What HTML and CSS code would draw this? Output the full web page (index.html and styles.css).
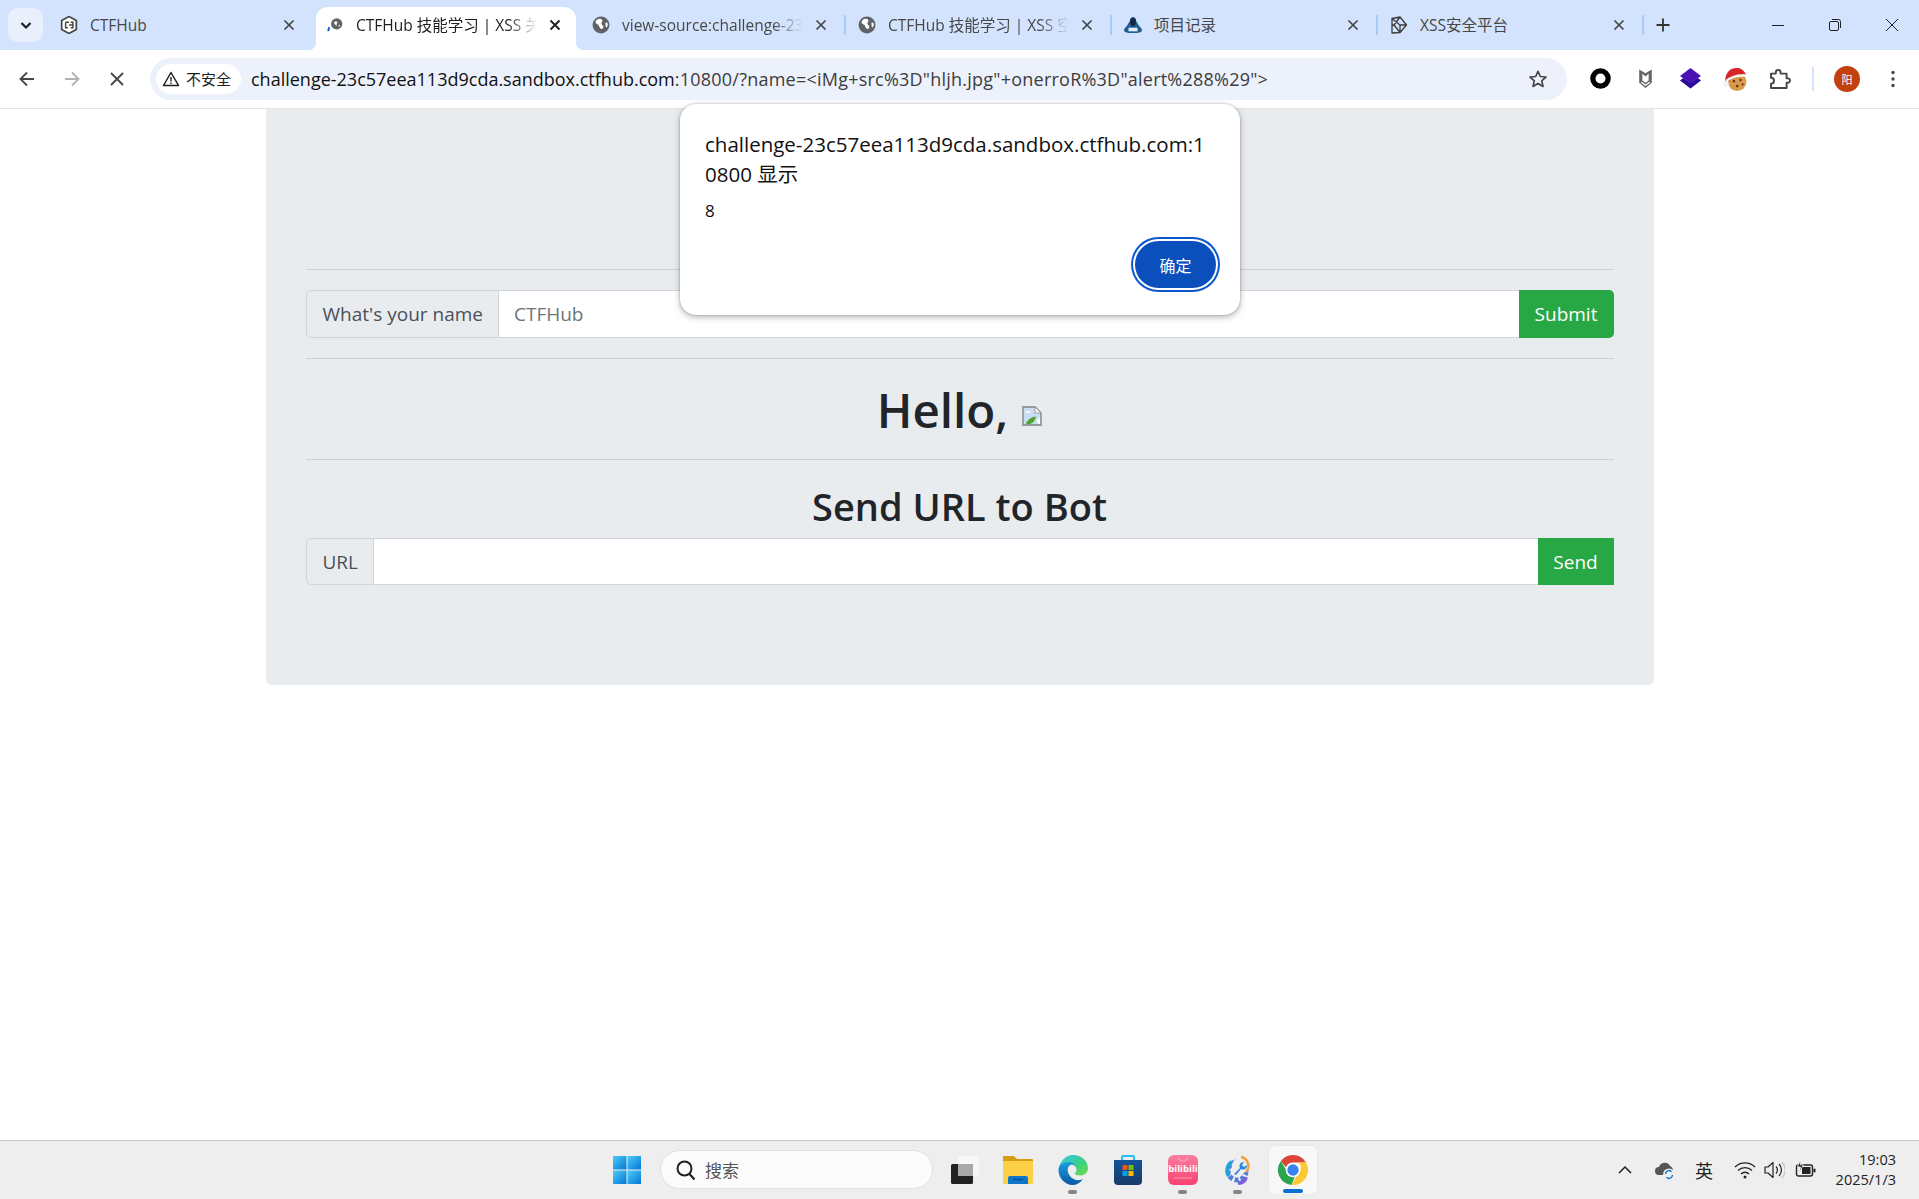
FILE: index.html
```html
<!DOCTYPE html>
<html lang="zh-CN">
<head>
<meta charset="utf-8">
<title>CTFHub 技能学习 | XSS</title>
<link rel="stylesheet" href="styles.css">
</head>
<body>
<header class="tabstrip">
  <button class="tab-search" aria-label="搜索标签页"><svg width="16" height="16" viewBox="0 0 16 16"><path d="M3.5 6 8 10.5 12.5 6" fill="none" stroke="#1f1f1f" stroke-width="2.2"/></svg></button>
  <div class="tab">
    <div class="tab-body">
      <svg class="fav" viewBox="0 0 16 16"><path d="M8 .5 14.500 4v8L8 15.500 1.500 12V4z" fill="#fff" stroke="#444" stroke-width="1.500"/><path d="M5 5.500h3M5 5.500v5h2M8 8h3M9.500 5.500h2v5h-2" fill="none" stroke="#444" stroke-width="1.300"/></svg>
      <span class="tab-title">CTFHub</span>
      <svg class="close" viewBox="0 0 20 20"><path d="M5.500 5.500l9 9M14.500 5.500l-9 9" stroke="#444746" stroke-width="1.700"/></svg>
    </div>
  </div>
  <div class="tab tab-active">
    <div class="tab-body">
      <svg class="fav" viewBox="0 0 16 16"><circle cx="9.500" cy="7" r="5" fill="#5f6368"/><path d="M7 5.500c1.500-1 2.500-1 3 0s-1 1-.5 2.500-1.500 0-2.500-2.500zM11.500 8c.7-.5 1-.3 1 .3s-1 1.700-1.500 1.200z" fill="#fff"/><path d="M2.200 13.500A5 5 0 0 1 3 10" fill="none" stroke="#0b57d0" stroke-width="1.800"/></svg>
      <span class="tab-title tab-fade title-strong">CTFHub 技能学习 | XSS 关</span>
      <svg class="close" viewBox="0 0 20 20"><path d="M5.500 5.500l9 9M14.500 5.500l-9 9" stroke="#1f1f1f" stroke-width="1.900"/></svg>
    </div>
  </div>
  <div class="tab tab-sep">
    <div class="tab-body">
      <svg class="fav" viewBox="0 0 16 16"><circle cx="8" cy="8" r="7.500" fill="#5f6368"/><path d="M4 3.500c2-1.500 4-1.500 5 0s-1 2-.5 3.500 2 1 1.500 3-2 2-3 .5-.5-2.500-2-3-2.500-1.500-1.500-3zM12 6c1-.5 2 0 2 1.500s-1 3-1.500 2.500-.5-2.500-.5-4z" fill="#fff"/></svg>
      <span class="tab-title tab-fade">view-source:challenge-23</span>
      <svg class="close" viewBox="0 0 20 20"><path d="M5.500 5.500l9 9M14.500 5.500l-9 9" stroke="#444746" stroke-width="1.700"/></svg>
    </div>
  </div>
  <div class="tab tab-sep">
    <div class="tab-body">
      <svg class="fav" viewBox="0 0 16 16"><circle cx="8" cy="8" r="7.500" fill="#5f6368"/><path d="M4 3.500c2-1.500 4-1.500 5 0s-1 2-.5 3.500 2 1 1.500 3-2 2-3 .5-.5-2.500-2-3-2.500-1.500-1.500-3zM12 6c1-.5 2 0 2 1.500s-1 3-1.500 2.500-.5-2.500-.5-4z" fill="#fff"/></svg>
      <span class="tab-title tab-fade">CTFHub 技能学习 | XSS 空</span>
      <svg class="close" viewBox="0 0 20 20"><path d="M5.500 5.500l9 9M14.500 5.500l-9 9" stroke="#444746" stroke-width="1.700"/></svg>
    </div>
  </div>
  <div class="tab tab-sep">
    <div class="tab-body">
      <svg class="fav" viewBox="0 0 20 20"><path d="M10 1c2 0 3.500 2 3.500 4.500l3 5c1.500 2 3.500 3 3.500 5.500-.5 2-4 3-10 3s-9.500-1-10-3c0-2.500 2-3.500 3.500-5.500l3-5C6.500 3 8 1 10 1z" fill="#1f5f91"/><path d="M7 4c1-2 5-2 6 0v5l-3 3-3-3z" fill="#12293f"/><rect x="5" y="13" width="10" height="4" fill="#e6eef5"/></svg>
      <span class="tab-title">项目记录</span>
      <svg class="close" viewBox="0 0 20 20"><path d="M5.500 5.500l9 9M14.500 5.500l-9 9" stroke="#444746" stroke-width="1.700"/></svg>
    </div>
  </div>
  <div class="tab tab-sep">
    <div class="tab-body">
      <svg class="fav" viewBox="0 0 18 18"><path d="M2 2.500 10 1l6.500 8L10 16.500 2 17zM2 2.500l8 6.500 6.500 0M10 1 4 9l6 7.500M2 9.500l2-.5M10 9v7.500" fill="none" stroke="#3c3c3c" stroke-width="1.300" stroke-linejoin="round"/></svg>
      <span class="tab-title">XSS安全平台</span>
      <svg class="close" viewBox="0 0 20 20"><path d="M5.500 5.500l9 9M14.500 5.500l-9 9" stroke="#444746" stroke-width="1.700"/></svg>
    </div>
  </div>
  <button class="new-tab" aria-label="新标签页"><svg width="16" height="16" viewBox="0 0 16 16"><path d="M8 1.500v13M1.500 8h13" stroke="#333" stroke-width="1.800"/></svg></button>
  <div class="win-controls">
    <svg viewBox="0 0 16 16"><path d="M2 8.500h12" stroke="#222" stroke-width="1"/></svg>
    <svg viewBox="0 0 16 16"><rect x="2.500" y="4.500" width="9" height="9" rx="1.500" fill="none" stroke="#222"/><path d="M5 2.500h6.500a2 2 0 0 1 2 2V11" fill="none" stroke="#222"/></svg>
    <svg viewBox="0 0 16 16"><path d="M2 2l12 12M14 2 2 14" stroke="#222" stroke-width="1"/></svg>
  </div>
</header>

<nav class="toolbar">
  <button class="tool-btn" aria-label="后退"><svg viewBox="0 0 20 20"><path d="M17 10H4M10 3.500 3.500 10l6.500 6.500" fill="none" stroke="#444746" stroke-width="1.800"/></svg></button>
  <button class="tool-btn" aria-label="前进"><svg viewBox="0 0 20 20"><path d="M3 10h13M10 3.500l6.500 6.500-6.500 6.500" fill="none" stroke="#b0b1b1" stroke-width="1.800"/></svg></button>
  <button class="tool-btn" aria-label="停止"><svg viewBox="0 0 20 20"><path d="M4 4l12 12M16 4 4 16" stroke="#444746" stroke-width="1.800"/></svg></button>
  <div class="omnibox">
    <span class="chip">
      <svg width="18" height="18" viewBox="0 0 18 18"><path d="M9 2.500 16.500 15.500h-15z" fill="none" stroke="#1f1f1f" stroke-width="1.500" stroke-linejoin="round"/><path d="M9 7v4.500M9 12.500v1.500" stroke="#1f1f1f" stroke-width="1.400"/></svg>
      <span>不安全</span>
    </span>
    <span class="url"><span class="host">challenge-23c57eea113d9cda.sandbox.ctfhub.com</span>:10800/?name=&lt;iMg+src%3D"hljh.jpg"+onerroR%3D"alert%288%29"&gt;</span>
    <svg class="star" viewBox="0 0 20 20"><path d="M10 2.300l2.300 5.200 5.700.5-4.300 3.800 1.300 5.600-5-3-5 3 1.300-5.600L2 8l5.700-.5z" fill="none" stroke="#444746" stroke-width="1.700" stroke-linejoin="round"/></svg>
  </div>
  <div class="ext-list">
    <span class="ext"><svg viewBox="0 0 20 20"><circle cx="10" cy="10" r="7.300" fill="none" stroke="#000" stroke-width="5"/></svg></span>
    <span class="ext"><svg viewBox="0 0 20 20"><path d="M4 1.500l6 3.500 6-3.500V14l-6 5-6-5z" fill="#666"/><path d="M7 5.500 10 8l3-2.500V12l-3 2-3-2z" fill="#fff"/><path d="M6 13.500l4 3 4-3" fill="none" stroke="#fff" stroke-width="1.200"/></svg></span>
    <span class="ext"><svg viewBox="0 0 20 20"><path d="M3 9.500 10 14l7-4.500 3 2.500-10 7.500L0 12z" fill="#2e0a99"/><path d="M10 0 20 7.500 10 14.500 0 7.500z" fill="#4a12b5"/></svg></span>
    <span class="ext"><svg class="ext-large" viewBox="0 0 22 22"><circle cx="13" cy="13.500" r="8.500" fill="#d99a4c"/><circle cx="10" cy="13" r="1.200" fill="#6b3c16"/><circle cx="16" cy="12" r="1.200" fill="#6b3c16"/><circle cx="13" cy="17.500" r="1.300" fill="#6b3c16"/><circle cx="18" cy="16" r="1" fill="#6b3c16"/><path d="M2 13C2 4 8 0 14 1c3 .5 6 3 7 6-5-1.500-12-1-15 6z" fill="#d6262b"/><path d="M3 13c3-3 9-5.500 18-5" fill="none" stroke="#f4f4f4" stroke-width="2.200"/><circle cx="2.800" cy="15.500" r="2.500" fill="#f4f4f4"/></svg></span>
    <span class="ext"><svg class="ext-large" viewBox="0 0 20 20"><path d="M2.500 5.500h4v-1a2 2 0 0 1 4 0v1h5v4h1a1.800 1.800 0 0 1 0 3.600h-1v4.400H2.500V14a2.500 2.500 0 0 0 0-5z" fill="none" stroke="#444746" stroke-width="1.600" stroke-linejoin="round"/></svg></span>
  </div>
  <span class="tool-sep"></span>
  <span class="avatar">阳</span>
  <button class="menu-btn" aria-label="菜单"><svg width="16" height="20" viewBox="0 0 16 20"><circle cx="8" cy="3.500" r="1.700" fill="#444746"/><circle cx="8" cy="10" r="1.700" fill="#444746"/><circle cx="8" cy="16.500" r="1.700" fill="#444746"/></svg></button>
</nav>

<main class="page">
  <section class="jumbotron">
    <hr class="rule rule-first">
    <form class="input-group">
      <span class="addon">What's your name</span>
      <input class="field" type="text" placeholder="CTFHub">
      <button class="btn btn-submit" type="button">Submit</button>
    </form>
    <hr class="rule">
    <h1 class="hello">Hello, <svg class="broken" viewBox="0 0 20 20"><path d="M1 1h12l6 6v12H1z" fill="#c9ddf3" stroke="#999" stroke-width="1.800"/><path d="M13 1v6h6z" fill="#fff" stroke="#999"/><path d="M4 5.500c1-1 2-1 3 0 1-.5 2 0 2 1H3.500c-.5 0-.2-.8.500-1z" fill="#fff"/><path d="M4 18c1-4 5-7 10-7.500-.5 3.500-3 6.500-6 7.500z" fill="#4fa52a"/><path d="M18 11.500l-3.500 3 2 3.500H18z" fill="#fff"/></svg></h1>
    <hr class="rule rule-tight">
    <h2 class="bot-title">Send URL to Bot</h2>
    <form class="input-group group-url">
      <span class="addon">URL</span>
      <input class="field" type="text">
      <button class="btn btn-send" type="button">Send</button>
    </form>
  </section>
</main>

<footer class="taskbar">
  <span class="cell"><svg width="30" height="30" viewBox="0 0 30 30"><defs><linearGradient id="winA" x1="0" y1="0" x2="1" y2="1"><stop offset="0" stop-color="#4fcbfa"/><stop offset="1" stop-color="#0078d4"/></linearGradient></defs><rect x="1" y="1" width="13.500" height="13.500" fill="url(#winA)"/><rect x="15.500" y="1" width="13.500" height="13.500" fill="url(#winA)"/><rect x="1" y="15.500" width="13.500" height="13.500" fill="url(#winA)"/><rect x="15.500" y="15.500" width="13.500" height="13.500" fill="url(#winA)"/></svg></span>
  <div class="search-pill">
    <svg width="22" height="22" viewBox="0 0 22 22"><circle cx="9.500" cy="9.500" r="7" fill="none" stroke="#222" stroke-width="2"/><path d="M14.500 15l5 5.500" stroke="#222" stroke-width="2.200"/></svg>
    <span>搜索</span>
  </div>
  <span class="cell"><svg class="task-view" width="30" height="30" viewBox="0 0 30 30"><rect x="1" y="9" width="22" height="20" rx="1.500" fill="#222"/><rect x="8" y="1" width="21" height="20" rx="1.500" fill="#f8f8f8" fill-opacity=".85"/><rect x="8" y="9" width="15" height="12" fill="#a9a9a9"/></svg></span>
  <span class="cell"><svg width="32" height="32" viewBox="0 0 32 32"><path d="M1 3a1 1 0 0 1 1-1h10l3 3h15a1 1 0 0 1 1 1v6H1z" fill="#d79c10"/><path d="M1 7h30v22a1 1 0 0 1-1 1H2a1 1 0 0 1-1-1z" fill="#fccf47"/><path d="M8 22h16a2 2 0 0 1 2 2v6H6v-6a2 2 0 0 1 2-2z" fill="#0d78c9"/><path d="M11 25.500h10" stroke="#05508e" stroke-width="1.500"/></svg></span>
  <span class="cell"><svg width="32" height="32" viewBox="0 0 32 32"><defs><linearGradient id="edgeA" x1="0" y1="0" x2="1" y2="1"><stop offset="0" stop-color="#35c1f1"/><stop offset=".6" stop-color="#3bd47f"/><stop offset="1" stop-color="#7bd64a"/></linearGradient><linearGradient id="edgeB" x1="0" y1="0" x2="0" y2="1"><stop offset="0" stop-color="#1b9de2"/><stop offset="1" stop-color="#0c59a4"/></linearGradient></defs><path d="M16 1c8.500 0 15 6 15 13 0 5-4 7.500-8 7.500-3 0-5-1-5.500-2 1-.5 2-2 2-3.500 0-3.500-3-6-7-6-5 0-9.500 3-11 6C2.500 8 8 1 16 1z" fill="url(#edgeA)"/><path d="M1.500 16c0-5 5-8 10.500-8 4 0 6.500 2.500 6.500 5 0-2-3-3-5-2-3 1.500-3.500 5-2 8.500S17 27 23 26c1.500-.3 3-1 3-1-3 4-6.500 6-10.500 6C8 31 1.500 24 1.500 16z" fill="url(#edgeB)"/></svg><i class="run-dot"></i></span>
  <span class="cell"><svg width="32" height="32" viewBox="0 0 32 32"><defs><linearGradient id="storeA" x1="0" y1="0" x2="0" y2="1"><stop offset="0" stop-color="#11559a"/><stop offset="1" stop-color="#1a3a6a"/></linearGradient></defs><path d="M10 7V3a1 1 0 0 1 1-1h10a1 1 0 0 1 1 1v4" fill="none" stroke="#22c3f3" stroke-width="2"/><path d="M2 6h28v21a4 4 0 0 1-4 4H6a4 4 0 0 1-4-4z" fill="url(#storeA)"/><rect x="10.500" y="11" width="5" height="5" fill="#f25022"/><rect x="16.500" y="11" width="5" height="5" fill="#7fba00"/><rect x="10.500" y="17" width="5" height="5" fill="#00a4ef"/><rect x="16.500" y="17" width="5" height="5" fill="#ffb900"/></svg></span>
  <span class="cell"><svg width="32" height="32" viewBox="0 0 32 32"><defs><linearGradient id="biliA" x1="0" y1="0" x2="0" y2="1"><stop offset="0" stop-color="#f97fa0"/><stop offset="1" stop-color="#f8416f"/></linearGradient></defs><rect x="1" y="1" width="30" height="30" rx="6" fill="url(#biliA)"/><path d="M11 4l3 3h4l3-3M7 24h18" fill="none" stroke="#ff9fb8" stroke-width="1.200"/><text x="16" y="18" text-anchor="middle" class="bili-text">bilibili</text></svg><i class="run-dot"></i></span>
  <span class="cell"><svg width="32" height="32" viewBox="0 0 32 32"><circle cx="15" cy="17" r="9" fill="none" stroke="#4d7fe0" stroke-width="5" stroke-dasharray="4 2.200"/><path d="M7 22a10 10 0 0 1 3-14" fill="none" stroke="#2aa0d8" stroke-width="4"/><path d="M16 29c4 0 7-2 8-6" fill="none" stroke="#7a63d8" stroke-width="4"/><circle cx="18" cy="12" r="8" fill="#eee"/><path d="M19 3a9 9 0 0 1 5 15" fill="none" stroke="#f2a23c" stroke-width="2.500"/><path d="M12 20l6-6a4 4 0 0 1 4-6l-2 3 2 2 3-2a4 4 0 0 1-6 4l-5 6z" fill="#2e86de"/></svg><i class="run-dot"></i></span>
  <span class="cell cell-active"><svg width="32" height="32" viewBox="0 0 32 32"><path d="M16 1a15 15 0 0 1 13 7.500H16a7.500 7.500 0 0 0-7 4.800L3.900 7A15 15 0 0 1 16 1z" fill="#db4437"/><path d="M3.900 7 10 17.500a7.500 7.500 0 0 0 8.500 3.500l-4 9.900A15 15 0 0 1 3.900 7z" fill="#2da44e"/><path d="M29 8.500A15 15 0 0 1 14.500 30.900L21 20a7.500 7.500 0 0 0 .500-11.500z" fill="#fcc934"/><circle cx="16" cy="16" r="7.300" fill="#fff"/><circle cx="16" cy="16" r="5.700" fill="#3b82f0"/></svg><i class="run-bar"></i></span>
  <div class="tray">
    <svg class="tray-chev" viewBox="0 0 16 16"><path d="M2 11l6-6 6 6" fill="none" stroke="#1f1f1f" stroke-width="1.500"/></svg>
    <svg class="tray-cloud" viewBox="0 0 22 22"><path d="M5 16a4 4 0 0 1 0-8 6 6 0 0 1 11-1 4.500 4.500 0 0 1 3 4v2H11v3z" fill="#555"/><circle cx="15" cy="15.500" r="6" fill="#eee"/><path d="M11.500 15a3.500 3.500 0 0 1 6-2.300M18.500 16a3.500 3.500 0 0 1-6 2.300" fill="none" stroke="#0a7ad6" stroke-width="1.500"/></svg>
    <span class="tray-lang">英</span>
    <svg class="tray-wifi" viewBox="0 0 22 22"><path d="M1 8a14 14 0 0 1 20 0M4 11.500a10 10 0 0 1 14 0M7 15a5.500 5.500 0 0 1 8 0" fill="none" stroke="#222" stroke-width="1.300"/><circle cx="11" cy="18" r="1.500" fill="#222"/></svg>
    <svg class="tray-sound" viewBox="0 0 22 22"><path d="M2 8h3l5-4.500v15L5 14H2z" fill="none" stroke="#222" stroke-width="1.200" stroke-linejoin="round"/><path d="M13 7.500a5 5 0 0 1 0 7" fill="none" stroke="#222" stroke-width="1.200"/><path d="M16 5a8.500 8.500 0 0 1 0 12" fill="none" stroke="#222" stroke-width="1.200"/><path d="M19 3a12 12 0 0 1 0 16" fill="none" stroke="#c4c4c4" stroke-width="1.200"/></svg>
    <svg class="tray-batt" viewBox="0 0 22 22"><rect x="1.500" y="6" width="16" height="11" rx="2" fill="none" stroke="#222" stroke-width="1.400"/><rect x="7" y="8" width="8.500" height="7" fill="#222"/><rect x="18.500" y="9.500" width="2" height="4" rx="1" fill="#222"/><path d="M5.500 1 2.500 8h3l-1 5 4-7H5.500z" fill="#222" stroke="#eee" stroke-width=".8"/></svg>
    <div class="clock"><div>19:03</div><div>2025/1/3</div></div>
  </div>
</footer>

<div class="dialog" role="alertdialog">
  <div class="dialog-title">challenge-23c57eea113d9cda.sandbox.ctfhub.com:1<br>0800 显示</div>
  <div class="dialog-msg">8</div>
  <div class="dialog-actions"><button class="dialog-ok">确定</button></div>
</div>
</body>
</html>
```

FILE: styles.css
```css
* { box-sizing: border-box; }
html, body { margin: 0; height: 100%; }
body {
  display: flex;
  flex-direction: column;
  height: 100vh;
  overflow: hidden;
  background: #fff;
  font-family: "Open Sans", "Noto Sans CJK SC", sans-serif;
  color: #212529;
}
button { font: inherit; border: 0; padding: 0; background: none; }
svg { display: block; flex: none; }

/* tab strip */
.tabstrip {
  flex: none;
  height: 50px;
  display: flex;
  align-items: flex-end;
  padding-left: 8px;
  background: #d3e3fd;
}
.tab-search {
  width: 35px;
  height: 34px;
  align-self: flex-start;
  margin: 8px 7px 0 0;
  border-radius: 10px;
  background: #e9f0fc;
  display: flex;
  align-items: center;
  justify-content: center;
}
.tab { position: relative; width: 266px; height: 43px; flex: none; }
.tab-body {
  position: relative;
  width: 260px;
  height: 43px;
  display: flex;
  align-items: center;
  padding: 0 11px 8px 10px;
  border-radius: 12px 12px 0 0;
}
.fav { width: 18px; height: 18px; margin-right: 12px; }
.tab-title {
  flex: 1;
  min-width: 0;
  overflow: hidden;
  white-space: nowrap;
  font-size: 15.500px;
  color: #474747;
}
.title-strong { color: #1f1f1f; }
.tab-fade {
  -webkit-mask-image: linear-gradient(to right, #000 calc(100% - 38px), transparent calc(100% - 8px));
  mask-image: linear-gradient(to right, #000 calc(100% - 38px), transparent calc(100% - 8px));
}
.close { width: 20px; height: 20px; flex: none; }
.tab-active .tab-body { background: #fff; }
.tab-active .tab-body::before,
.tab-active .tab-body::after {
  content: "";
  position: absolute;
  bottom: 0;
  width: 8px;
  height: 8px;
}
.tab-active .tab-body::before { left: -8px; background: radial-gradient(circle at 0 0, transparent 8px, #fff 8.500px); }
.tab-active .tab-body::after { right: -8px; background: radial-gradient(circle at 100% 0, transparent 8px, #fff 8.500px); }
.tab-sep::after {
  content: "";
  position: absolute;
  right: 2px;
  top: 8px;
  width: 2px;
  height: 20px;
  border-radius: 1px;
  background: #a8c7fa;
}
.new-tab {
  width: 28px;
  height: 28px;
  align-self: flex-start;
  margin: 11px 0 0 3px;
  display: flex;
  align-items: center;
  justify-content: center;
}
.win-controls {
  margin-left: auto;
  align-self: flex-start;
  display: flex;
  gap: 41px;
  padding: 17px 19px 0 0;
}
.win-controls svg { width: 16px; height: 16px; }

/* toolbar */
.toolbar {
  flex: none;
  height: 59px;
  display: flex;
  align-items: center;
  padding: 0 0 1px 9px;
  background: #fff;
  border-bottom: 1px solid #e3e3e3;
  border-radius: 10px 10px 0 0;
}
.tool-btn {
  width: 36px;
  height: 36px;
  margin-right: 9px;
  display: flex;
  align-items: center;
  justify-content: center;
}
.tool-btn svg { width: 20px; height: 20px; }
.omnibox {
  width: 1417px;
  height: 42px;
  margin-left: 6px;
  padding: 0 19px 0 6px;
  display: flex;
  align-items: center;
  border-radius: 21px;
  background: #ecf1fb;
}
.chip {
  width: 85px;
  height: 30px;
  flex: none;
  display: flex;
  align-items: center;
  gap: 6px;
  padding-left: 6px;
  border-radius: 15px;
  background: #fff;
  font-size: 15px;
  color: #1f1f1f;
}
.url {
  flex: 1;
  min-width: 0;
  margin-left: 10px;
  white-space: nowrap;
  overflow: hidden;
  font-size: 18px;
  color: #3c3c3c;
  letter-spacing: .23px;
}
.host { color: #111; letter-spacing: 0; }
.star { width: 20px; height: 20px; }
.ext-list { display: flex; gap: 9px; margin-left: 15px; }
.ext { width: 36px; height: 36px; display: flex; align-items: center; justify-content: center; }
.ext svg { width: 21px; height: 21px; }
.ext .ext-large { width: 24px; height: 24px; }
.tool-sep { width: 2px; height: 24px; margin-left: 14px; background: #d3e3fd; }
.avatar {
  width: 26px;
  height: 26px;
  margin-left: 20px;
  display: flex;
  align-items: center;
  justify-content: center;
  border-radius: 50%;
  background: #c2410f;
  color: #fff;
  font-size: 11px;
}
.menu-btn { width: 16px; margin-left: 25px; }

/* page */
.page { flex: 1; min-height: 0; display: flex; justify-content: center; background: #fff; }
.jumbotron {
  width: 1388px;
  height: 576px;
  padding: 160px 40px 0;
  background: #e9ecef;
  border-radius: 0 0 5px 5px;
}
.rule { margin: 20px 0; border: 0; border-top: 1px solid #ced2d7; }
.rule-first { margin-top: 0; }
.rule-tight { margin-bottom: 22px; }
.input-group { display: flex; height: 48px; font-size: 19px; }
.group-url { height: 47px; }
.addon {
  display: flex;
  align-items: center;
  padding: 0 15px 0 16px;
  border: 1px solid #ced4da;
  border-radius: 5px 0 0 5px;
  background: #e9ecef;
  color: #495057;
  white-space: nowrap;
}
.field {
  flex: 1;
  min-width: 0;
  padding: 0 15px;
  border: 1px solid #ced4da;
  border-left: 0;
  border-right: 0;
  background: #fff;
  font: inherit;
  outline: 0;
}
.field::placeholder { color: #6c757d; opacity: 1; }
.btn {
  flex: none;
  background: #28a745;
  color: #fff;
  font-size: 19px;
}
.btn-submit { width: 95px; border-radius: 0 5px 5px 0; }
.btn-send { width: 76px; }
.hello {
  height: 60px;
  margin: 0;
  padding-top: 2px;
  display: flex;
  align-items: center;
  justify-content: center;
  gap: 14px;
  font-size: 47.500px;
  line-height: 58px;
  font-weight: 600;
}
.broken { width: 20px; height: 20px; margin-top: 12px; }
.bot-title {
  margin: 0 0 8px;
  text-align: center;
  font-size: 38px;
  line-height: 48px;
  font-weight: 600;
}

/* taskbar */
.taskbar {
  flex: none;
  height: 59px;
  display: flex;
  align-items: center;
  padding: 0 0 1px 603px;
  border-top: 1px solid #c6c6c6;
  background: #eee;
}
.cell {
  position: relative;
  width: 48px;
  height: 48px;
  flex: none;
  margin-right: 7px;
  display: flex;
  align-items: center;
  justify-content: center;
}
.task-view { margin-left: 4px; }
.search-pill {
  width: 273px;
  height: 39px;
  margin: 0 6px 0 2px;
  display: flex;
  align-items: center;
  gap: 8px;
  padding-left: 14px;
  border: 1px solid #e0e0e0;
  border-radius: 20px;
  background: #fbfbfb;
  font-size: 17px;
  color: #555;
}
.run-dot {
  position: absolute;
  left: 19px;
  bottom: 0;
  width: 9px;
  height: 4px;
  border-radius: 2px;
  background: #858585;
}
.cell-active { border-radius: 5px; background: #f8f8f8; box-shadow: 0 0 1px #ccc; }
.run-bar {
  position: absolute;
  left: 14px;
  bottom: 1px;
  width: 20px;
  height: 4px;
  border-radius: 2px;
  background: #0a70cf;
}
.bili-text { font: 700 9.500px "Open Sans", sans-serif; fill: #fff; }
.tray { margin-left: auto; display: flex; align-items: center; padding-right: 23px; }
.tray-chev { width: 16px; height: 16px; }
.tray-cloud { width: 22px; height: 22px; margin-left: 21px; }
.tray-lang { margin-left: 19px; width: 20px; font-size: 18px; color: #222; }
.tray-wifi { width: 22px; height: 22px; margin-left: 19px; }
.tray-sound { width: 22px; height: 22px; margin-left: 7px; }
.tray-batt { width: 22px; height: 22px; margin-left: 10px; }
.clock {
  width: 70px;
  margin-left: 9px;
  text-align: right;
  font-size: 14.500px;
  line-height: 20px;
  color: #222;
}

/* alert */
.dialog {
  position: absolute;
  left: 680px;
  top: 104px;
  width: 560px;
  height: 211px;
  padding: 25px 25px;
  border-radius: 16px;
  background: #fff;
  box-shadow: 0 0 2px rgba(60,64,67,.35), 0 2px 6px rgba(60,64,67,.4);
}
.dialog-title { font-size: 20.500px; line-height: 30px; color: #111; white-space: nowrap; }
.dialog-msg { margin-top: 12px; font-size: 17px; line-height: 20px; color: #111; }
.dialog-actions { display: flex; justify-content: flex-end; margin: 20px -1px 0 0; }
.dialog-ok {
  width: 81px;
  height: 47px;
  border-radius: 24px;
  background: #0b4fbc;
  color: #fff;
  font-size: 16px;
  box-shadow: 0 0 0 2px #fff, 0 0 0 4px #0b57d0;
}
```
